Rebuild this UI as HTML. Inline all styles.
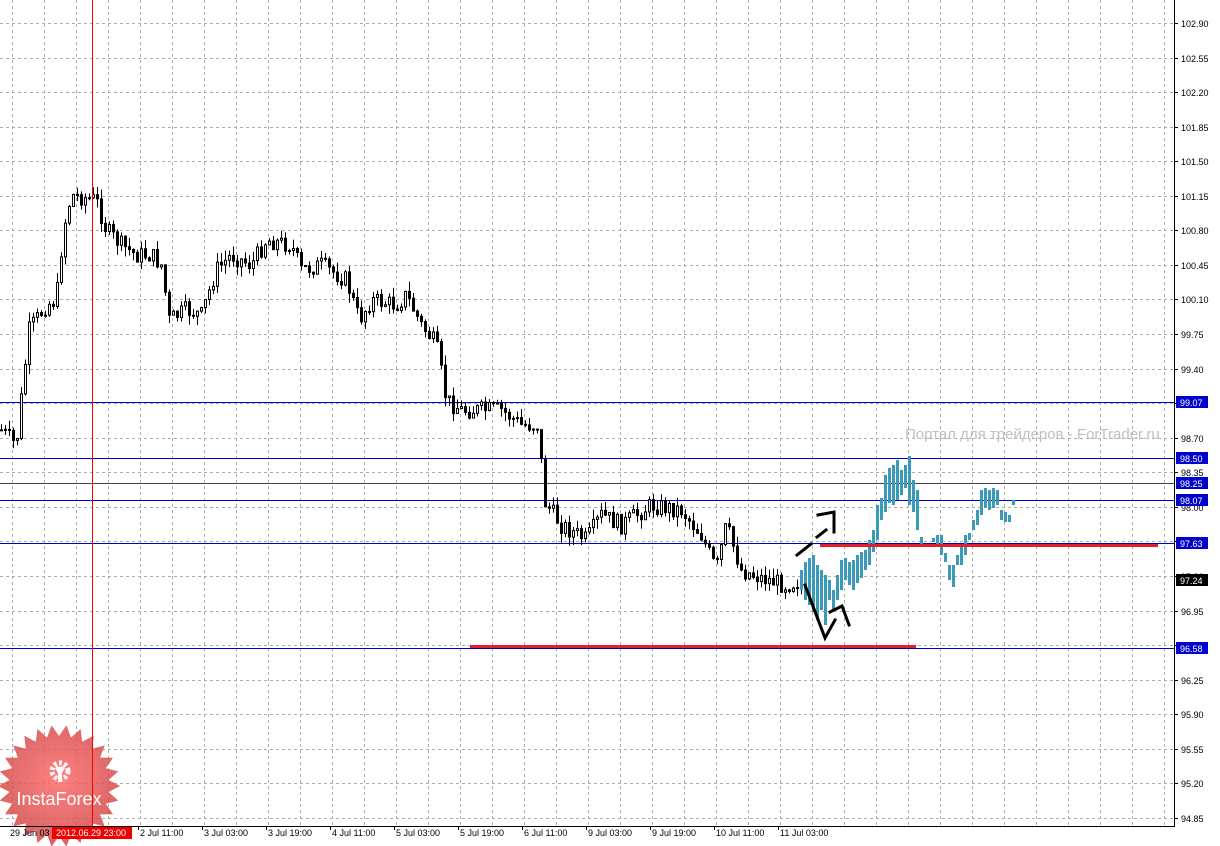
<!DOCTYPE html>
<html><head><meta charset="utf-8"><style>
html,body{margin:0;padding:0;background:#fff;}
svg{display:block;font-family:"Liberation Sans",sans-serif;}
</style></head><body>
<svg id="s" width="1220" height="846" xmlns="http://www.w3.org/2000/svg">
<defs><radialGradient id="rg" cx="0.5" cy="0.45" r="0.55"><stop offset="0" stop-color="#ff6a6a"/><stop offset="1" stop-color="#d04848"/></radialGradient></defs>
<rect width="1220" height="846" fill="#fff"/>
<g id="grid" stroke="#a8b0a8" stroke-width="1" stroke-dasharray="3,3"></g>
<g id="hl"></g>
<g id="candles"></g>
<g id="blue" fill="#3a9ab8"></g>
<line x1="820" y1="545.5" x2="1158" y2="545.5" stroke="#e0202a" stroke-width="3"/>
<line x1="470" y1="646.5" x2="916" y2="646.5" stroke="#e0202a" stroke-width="3"/>
<g stroke="#000" stroke-width="3" fill="none" stroke-linecap="square">
<path d="M797,555 L811,544"/><path d="M817,537 L826,530"/><path d="M818,515 L834,512 L834,532"/>
<path d="M805,585 L825,638 L835,620"/><path d="M830,612 L842,606 L849,625"/>
</g>
<text x="905" y="439" font-size="15" fill="#c0c0c0">Портал для трейдеров - ForTrader.ru</text>
<g opacity="0.85">
<polygon id="star" fill="url(#rg)"/>
</g>
<line x1="92.5" y1="0" x2="92.5" y2="826" stroke="#f00" stroke-width="1"/>
<g fill="#fff" opacity="0.95">
<circle cx="60" cy="771" r="8" fill="none" stroke="#fff" stroke-width="5" stroke-dasharray="3,2.2"/>
<circle cx="60" cy="769" r="2.5"/>
<path d="M55,768 L58,773 L58,782 L62,782 L62,773 L65,768 L62,766 L60,771 L58,766 Z"/>
</g>
<text x="59" y="805" font-size="18" fill="#fff" text-anchor="middle">InstaForex</text>
<line x1="1174.5" y1="0" x2="1174.5" y2="826" stroke="#000"/>
<line x1="0" y1="826.5" x2="1175" y2="826.5" stroke="#000"/>
<g id="ax" font-size="9" fill="#000"></g>
<g id="bx" font-size="9" fill="#000"></g>
</svg>
<script>
var NS="http://www.w3.org/2000/svg";
function el(p,t,a,txt){var e=document.createElementNS(NS,t);for(var k in a)e.setAttribute(k,a[k]);if(txt)e.textContent=txt;document.getElementById(p).appendChild(e);return e;}
for(var x=12;x<1174;x+=32)el('grid','line',{x1:x+.5,y1:0,x2:x+.5,y2:826});
var prices=["102.90","102.55","102.20","101.85","101.50","101.15","100.80","100.45","100.10","99.75","99.40","99.05","98.70","98.35","98.00","97.65","97.30","96.95","96.60","96.25","95.90","95.55","95.20","94.85"];
for(var i=0;i<prices.length;i++){var y=Math.round(23+i*34.56);
 el('grid','line',{x1:0,y1:y+.5,x2:1174,y2:y+.5});
 el('ax','line',{x1:1174,y1:y+.5,x2:1178,y2:y+.5,stroke:'#000'});
 el('ax','text',{x:1181,y:y+4},prices[i]);}
[[402,'#00c'],[458,'#00c'],[500,'#00c'],[543,'#00c'],[648,'#00c'],[483,'#444']].forEach(function(h){el('hl','line',{x1:0,y1:h[0]+.5,x2:1174,y2:h[0]+.5,stroke:h[1]});});
[[402,'99.07','#00c'],[458,'98.50','#00c'],[483,'98.25','#00c'],[500,'98.07','#00c'],[543,'97.63','#00c'],[580,'97.24','#000'],[648,'96.58','#00c']].forEach(function(b){
 el('ax','rect',{x:1176,y:b[0]-6,width:32,height:12,fill:b[2]});
 el('ax','text',{x:1180,y:b[0]+4,fill:'#fff'},b[1]);});
el('bx','text',{x:10,y:836},'29 Jun 03');
el('bx','rect',{x:52,y:827,width:80,height:12,fill:'#e00'});
el('bx','text',{x:56,y:836,fill:'#fff'},'2012.06.29 23:00');
var bl=['2 Jul 11:00','3 Jul 03:00','3 Jul 19:00','4 Jul 11:00','5 Jul 03:00','5 Jul 19:00','6 Jul 11:00','9 Jul 03:00','9 Jul 19:00','10 Jul 11:00','11 Jul 03:00'];
for(var i=0;i<bl.length;i++){var x=140+64*i;el('bx','line',{x1:x-1.5,y1:826,x2:x-1.5,y2:830,stroke:'#000'});el('bx','text',{x:x,y:836},bl[i]);}
var K=[[0,430],[15,445],[22,380],[28,330],[45,305],[55,300],[62,230],[70,195],[95,200],[105,230],[120,245],[135,255],[150,255],[160,265],[168,320],[185,310],[200,315],[215,270],[230,255],[250,265],[265,240],[290,245],[300,270],[320,265],[345,280],[358,320],[370,300],[395,305],[405,295],[420,325],[435,345],[445,400],[460,410],[500,410],[520,425],[538,425],[542,500],[560,525],[585,540],[600,515],[620,525],[650,505],[680,510],[700,535],[715,570],[725,525],[740,570],[760,578],[785,585],[800,580]];
function interp(x){for(var i=1;i<K.length;i++){if(x<=K[i][0]){var a=K[i-1],b=K[i];return a[1]+(b[1]-a[1])*(x-a[0])/(b[0]-a[0]);}}return 580;}
var seed=7;function rnd(){seed=(seed*9301+49297)%233280;return seed/233280;}
var prev=interp(0);
for(var x=0;x<=800;x+=4){var c=interp(x)+(rnd()-.5)*18;var o=prev;var hi=Math.min(o,c)-rnd()*10,lo=Math.max(o,c)+rnd()*10;
 el('candles','line',{x1:x+1.5,y1:hi,x2:x+1.5,y2:lo,stroke:'#000'});
 var t=Math.min(o,c),h=Math.max(Math.abs(c-o),1);
 el('candles','rect',{x:x+0.5,y:t,width:2,height:h,fill:c<o?'#fff':'#000',stroke:'#000','stroke-width':1});
 prev=c;}
var B=[[800,570,590],[804,562,600],[808,558,605],[812,555,612],[816,565,620],[820,570,610],[824,575,625],[828,580,600],[832,590,610],[836,575,600],[840,560,590],[844,558,580],[848,562,585],[852,560,590],[856,555,583],[860,552,578],[864,550,570],[868,540,565],[872,530,552],[876,505,540],[880,498,520],[884,475,512],[888,468,503],[892,465,505],[896,460,500],[900,470,495],[904,465,488],[908,456,505],[912,480,512],[916,490,530],[920,537,545],[932,538,542],[936,535,545],[940,535,555],[944,553,562],[948,565,580],[952,565,587],[956,555,565],[960,545,565],[964,535,555],[968,533,540],[972,520,530],[976,510,525],[980,490,515],[984,488,508],[988,490,510],[992,488,508],[996,490,505],[1000,510,520],[1004,512,522],[1008,515,522],[1012,500,505]];
B.forEach(function(b){el('blue','rect',{x:b[0],y:b[1],width:3,height:b[2]-b[1]});});
var pts=[],n=26;for(var i=0;i<2*n;i++){var r=i%2?50:61,a=Math.PI*i/n;pts.push((59+r*Math.cos(a)).toFixed(1)+','+(786+r*Math.sin(a)).toFixed(1));}
document.getElementById('star').setAttribute('points',pts.join(' '));
</script>
</body></html>
